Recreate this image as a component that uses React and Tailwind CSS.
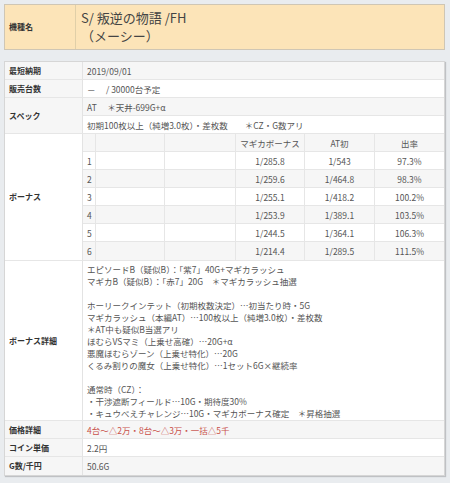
import React from "react";

const font = { fontFamily: '"Noto Sans CJK JP", "Noto Sans", sans-serif' };

function Label({ children, className = "" }) {
  return (
    <div className={"flex items-center pl-[4px] bg-[#f6f6f6] border-r border-[#e3e3e3] text-[8px] font-bold text-[#333] " + className}>
      {children}
    </div>
  );
}

const bonusRows = [
  ["1", "1/285.8", "1/543", "97.3%"],
  ["2", "1/259.6", "1/464.8", "98.3%"],
  ["3", "1/255.1", "1/418.2", "100.2%"],
  ["4", "1/253.9", "1/389.1", "103.5%"],
  ["5", "1/244.5", "1/364.1", "106.3%"],
  ["6", "1/214.4", "1/289.5", "111.5%"],
];

const detailLines = [
  "エピソードB（疑似B）：「紫7」40G+マギカラッシュ",
  "マギカB（疑似B）：「赤7」20G　＊マギカラッシュ抽選",
  "",
  "ホーリークインテット（初期枚数決定）…初当たり時・5G",
  "マギカラッシュ（本編AT）…100枚以上（純増3.0枚）・差枚数",
  "＊AT中も疑似B当選アリ",
  "ほむらVSマミ（上乗せ高確）…20G+α",
  "悪魔ほむらゾーン（上乗せ特化）…20G",
  "くるみ割りの魔女（上乗せ特化）…1セット6G×継続率",
  "",
  "通常時（CZ）：",
  "・干渉遮断フィールド…10G・期待度30%",
  "・キュウべえチャレンジ…10G・マギカボーナス確定　＊昇格抽選",
];

function BonusTable() {
  const cols = "h-[18px] grid grid-cols-[13px_69px_71px_69px_70px_1fr]";
  const cell = "h-full flex items-center justify-center border-r border-[#e6e6e6] last:border-r-0";
  return (
    <div className="flex flex-col">
      <div className={cols + " bg-[#f6f6f6] border-b border-[#e6e6e6]"}>
        <div className={cell}></div>
        <div className={cell}></div>
        <div className={cell}></div>
        <div className={cell}>マギカボーナス</div>
        <div className={cell}>AT初</div>
        <div className={cell}>出率</div>
      </div>
      {bonusRows.map((r, i) => (
        <div
          key={i}
          className={cols + " " + (i % 2 === 0 ? "bg-white" : "bg-[#f6f6f6]") + (i < 5 ? " border-b border-[#e6e6e6]" : "")}
        >
          <div className="h-full flex items-center pl-[4px] border-r border-[#e6e6e6]">{r[0]}</div>
          <div className={cell}></div>
          <div className={cell}></div>
          <div className={cell}>{r[1]}</div>
          <div className={cell}>{r[2]}</div>
          <div className={cell}>{r[3]}</div>
        </div>
      ))}
    </div>
  );
}

export default function App() {
  const val = "flex items-center pl-[4px] h-[18px]";
  return (
    <div style={font} className="w-[450px] h-[483px] bg-[#e9ecef] pt-[4px] px-[4px] text-[8.5px] leading-[12px] text-[#555]">
      {/* Header */}
      <div className="w-[441px] h-[46px] flex bg-[#fce4b8] border border-[#cfc6b4]">
        <div className="w-[71px] flex items-center pl-[4px] border-r border-[#e0cfa8] text-[8px] font-bold text-[#333]">
          機種名
        </div>
        <div className="flex flex-col justify-center pl-[5px] text-[13px] leading-[18px] text-[#444]">
          <div>S/ 叛逆の物語 /FH</div>
          <div>（メーシー）</div>
        </div>
      </div>

      {/* Main table */}
      <div className="mt-[11px] w-[441px] bg-white border border-[#d6d6d6] shadow-[1px_1px_1px_rgba(0,0,0,0.18)] grid grid-cols-[78px_1fr]">
        <Label className="border-b border-b-[#e6e6e6]">最短納期</Label>
        <div className={val + " bg-[#f6f6f6] border-b border-[#e6e6e6]"}>2019/09/01</div>

        <Label className="border-b border-b-[#e6e6e6]">販売台数</Label>
        <div className={val + " bg-white border-b border-[#e6e6e6]"}>－　 / 30000台予定</div>

        <Label className="border-b border-b-[#e6e6e6]">スペック</Label>
        <div className="flex flex-col border-b border-[#e6e6e6]">
          <div className={val + " bg-[#f6f6f6] border-b border-[#e6e6e6]"}>AT　 ＊天井-699G+α</div>
          <div className="flex items-center pl-[4px] h-[17px] bg-white">初期100枚以上（純増3.0枚）・差枚数　　＊CZ・G数アリ</div>
        </div>

        <Label className="border-b border-b-[#e6e6e6] bg-white">ボーナス</Label>
        <div className="border-b border-[#e6e6e6]">
          <BonusTable />
        </div>

        <Label className="border-b border-b-[#e6e6e6] bg-white">ボーナス詳細</Label>
        <div className="flex flex-col pl-[4px] pt-[2px] pb-[1px] bg-white border-b border-[#e6e6e6]">
          {detailLines.map((l, i) => (
            <div key={i} className="h-[12px] whitespace-nowrap">{l}</div>
          ))}
        </div>

        <Label className="border-b border-b-[#e6e6e6]">価格詳細</Label>
        <div className={val + " bg-[#f6f6f6] border-b border-[#e6e6e6] text-[#c9514b]"}>4台～△2万・8台～△3万・一括△5千</div>

        <Label className="border-b border-b-[#e6e6e6]">コイン単価</Label>
        <div className={val + " bg-white border-b border-[#e6e6e6]"}>2.2円</div>

        <Label>G数/千円</Label>
        <div className={val + " bg-[#f6f6f6]"}>50.6G</div>
      </div>
    </div>
  );
}
